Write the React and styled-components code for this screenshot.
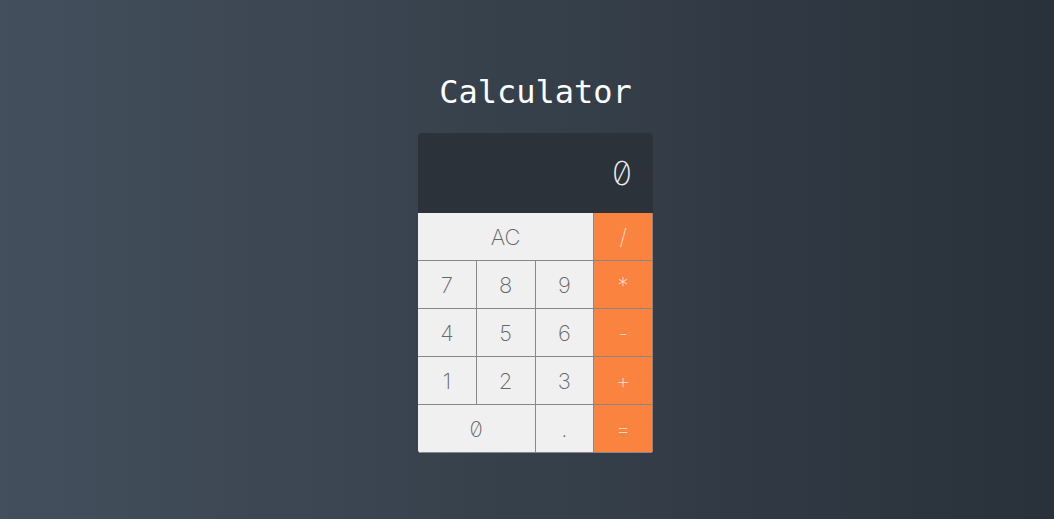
import React, { useState } from "react";
import styled, { createGlobalStyle } from "styled-components";

const GlobalStyle = createGlobalStyle`
  html, body {
    margin: 0;
    padding: 0;
  }
  body {
    font-family: "DejaVu Sans Mono", "Liberation Mono", monospace;
  }
`;

const keys = [
  { label: "AC", span: 3 },
  { label: "/", op: true },
  { label: "7" },
  { label: "8" },
  { label: "9" },
  { label: "*", op: true },
  { label: "4" },
  { label: "5" },
  { label: "6" },
  { label: "-", op: true },
  { label: "1" },
  { label: "2" },
  { label: "3" },
  { label: "+", op: true },
  { label: "0", span: 2 },
  { label: "." },
  { label: "=", op: true },
];

const App = () => {
  const [display] = useState("0");

  return (
    <Page>
      <GlobalStyle />
      <Title>Calculator</Title>
      <Calc>
        <Display>{display}</Display>
        <Keypad>
          {keys.map((k, i) => (
            <Key key={i} $span={k.span} $op={k.op}>
              {k.label}
            </Key>
          ))}
        </Keypad>
      </Calc>
    </Page>
  );
};

export default App;

const Page = styled.div`
  width: 100%;
  min-height: 100vh;
  background: linear-gradient(to right, #434f5c, #29313a);
  display: flex;
  flex-direction: column;
  align-items: center;
  box-sizing: border-box;
  padding: 72px 0 0 17px;
`;

const Title = styled.h1`
  margin: 0 0 21px;
  font-family: "DejaVu Sans Mono", monospace;
  font-weight: 400;
  font-size: 32px;
  line-height: 40px;
  color: #ffffff;
`;

const Calc = styled.div`
  width: 235px;
  border-radius: 4px;
  overflow: hidden;
`;

const Display = styled.div`
  height: 80px;
  background: #2b323a;
  color: #eeeeee;
  font-family: "Inter", sans-serif;
  font-feature-settings: "zero" 1;
  font-size: 33px;
  font-weight: 200;
  display: flex;
  align-items: center;
  justify-content: flex-end;
  padding: 0 21px;
`;

const Keypad = styled.div`
  display: grid;
  grid-template-columns: repeat(4, 1fr);
  grid-auto-rows: 48px;
  background: #f0f0f0;
`;

const Key = styled.div`
  grid-column: span ${(p) => p.$span || 1};
  box-sizing: border-box;
  background: ${(p) => (p.$op ? "#fa843f" : "#f0f0f0")};
  color: ${(p) => (p.$op ? "#fddcc6" : "#666666")};
  border-right: 1px solid #888888;
  border-bottom: 1px solid #888888;
  font-family: "Inter", sans-serif;
  font-feature-settings: "zero" 1;
  font-weight: 200;
  font-size: 22px;
  display: flex;
  align-items: center;
  justify-content: center;
`;
